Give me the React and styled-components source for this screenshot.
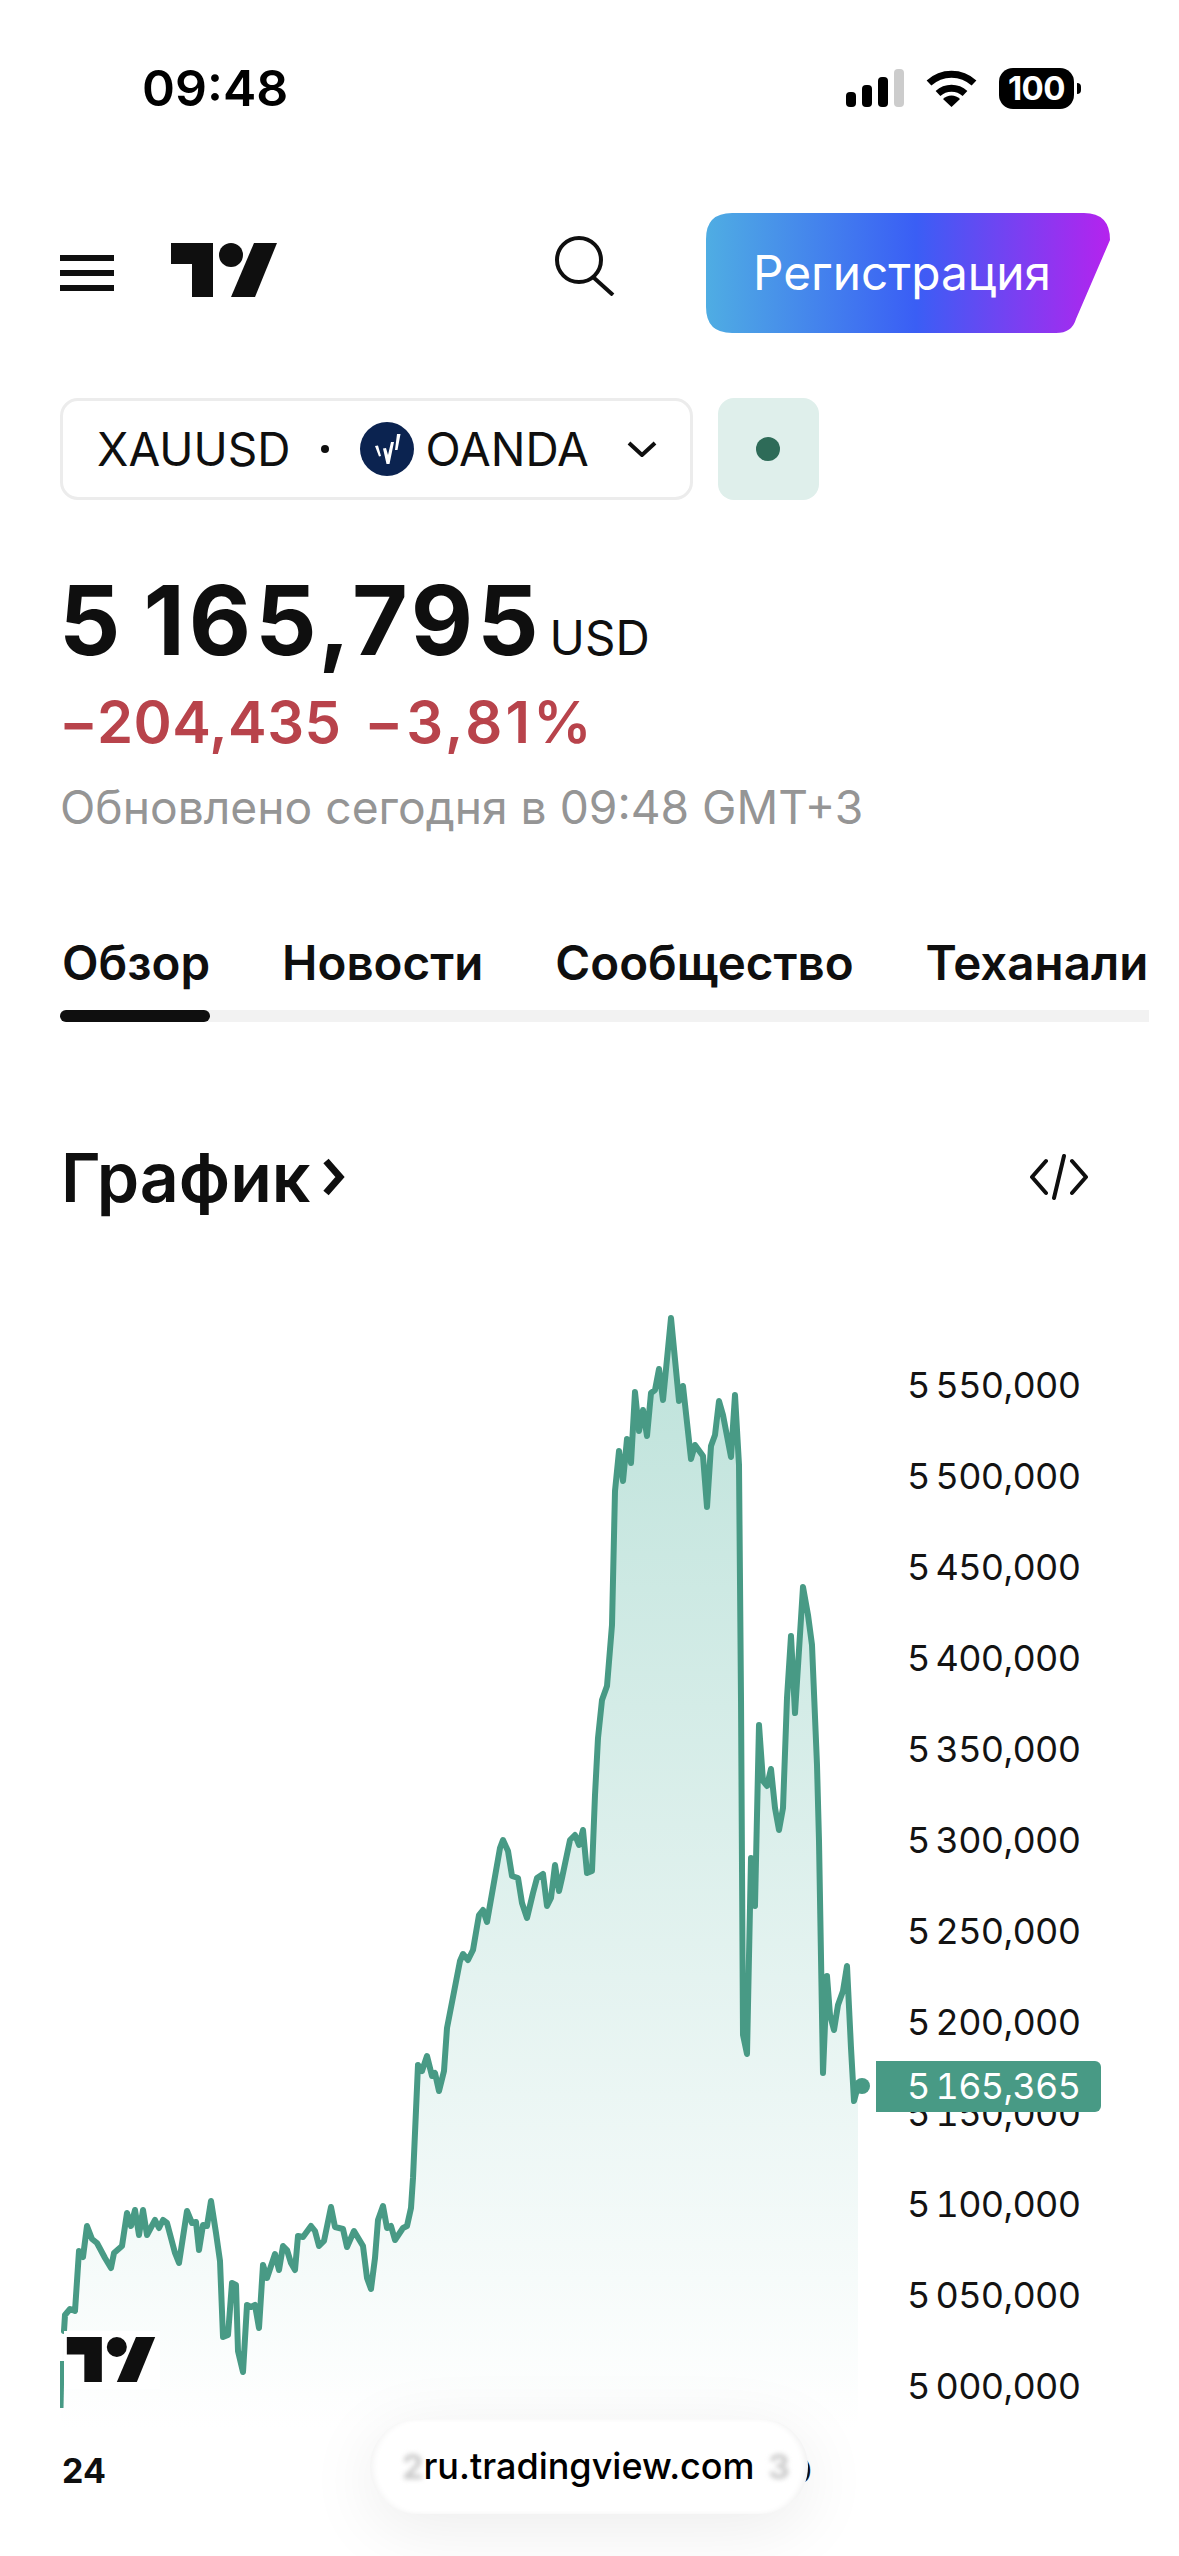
import React from "react";
import styled, { createGlobalStyle } from "styled-components";

const Global = createGlobalStyle`
  html, body { margin: 0; padding: 0; background: #fff; }
  body { font-family: Inter, "Noto Sans", "Liberation Sans", sans-serif; color: #0f0f0f; }
`;

const Page = styled.div`
  position: relative;
  width: 1179px;
  height: 2556px;
  overflow: hidden;
  background: #fff;
`;

const StatusBar = styled.div`
  height: 176px;
  display: flex;
  align-items: center;
  justify-content: space-between;
  padding: 0 98px 0 142px;
`;
const Time = styled.div`
  font-size: 50px;
  font-weight: 600;
  line-height: 60px;
  color: #000;
`;
const StatusIcons = styled.div`
  display: flex;
  align-items: center;
  gap: 22px;
`;
const Battery = styled.div`
  display: flex;
  align-items: center;
  gap: 3px;
`;
const BatteryBody = styled.div`
  width: 75px;
  height: 41px;
  border-radius: 14px;
  background: #000;
  color: #fff;
  display: flex;
  align-items: center;
  justify-content: center;
  font-size: 33px;
  font-weight: 700;
  letter-spacing: -0.5px;
`;
const BatteryCap = styled.div`
  width: 4px;
  height: 11px;
  border-radius: 0 4px 4px 0;
  background: #000;
`;

const Header = styled.header`
  margin-top: 37px;
  height: 120px;
  display: flex;
  align-items: center;
  padding: 0 69px 0 60px;
`;
const Burger = styled.div`
  width: 54px;
  display: flex;
  flex-direction: column;
  gap: 9px;
  span { display: block; height: 6px; background: #0f0f0f; }
`;
const LogoLink = styled.div`
  margin: -6px 0 0 57px;
  display: flex;
`;
const SearchBtn = styled.div`
  margin: -14px 91px 0 auto;
  display: flex;
`;
const Signup = styled.div`
  width: 404px;
  height: 120px;
  display: flex;
  align-items: center;
  justify-content: center;
  padding-right: 12px;
  box-sizing: border-box;
  color: #fff;
  font-size: 47.8px;
  line-height: 120px;
  font-weight: 400;
  background: linear-gradient(90deg, #4fade3 0%, #3a5ef5 52%, #b523ee 100%);
  clip-path: path("M26 0 H378 Q404 0 404 27 L370 106 Q366 120 350 120 H26 Q0 120 0 94 V26 Q0 0 26 0 Z");
`;

const SymbolRow = styled.div`
  margin-top: 65px;
  display: flex;
  gap: 25px;
  padding-left: 60px;
`;
const Selector = styled.div`
  width: 633px;
  height: 102px;
  box-sizing: border-box;
  border: 3px solid #ececec;
  border-radius: 18px;
  display: flex;
  align-items: center;
  padding-left: 34px;
  font-size: 46px;
  font-weight: 400;
`;
const Sep = styled.span`
  width: 8px;
  height: 8px;
  border-radius: 50%;
  background: #0f0f0f;
  margin: 0 31px;
`;
const BrokerLogo = styled.svg`
  margin-right: 11px;
  flex: none;
`;
const Caret = styled.svg`
  margin-left: 38px;
`;
const Status = styled.div`
  width: 101px;
  height: 102px;
  border-radius: 16px;
  background: #dfefeb;
  display: flex;
  align-items: center;
  justify-content: center;
  padding-right: 2px;
  box-sizing: border-box;
  i { display: block; width: 24px; height: 24px; border-radius: 50%; background: #2e6b58; }
`;

const PriceRow = styled.div`
  margin-top: 70px;
  padding-left: 59px;
  display: flex;
  align-items: baseline;
  gap: 7px;
  line-height: 100px;
`;
const Price = styled.span`
  font-size: 96px;
  font-weight: 700;
  letter-spacing: 4px;
`;
const Currency = styled.span`
  font-size: 47.5px;
  font-weight: 400;
`;
const Change = styled.div`
  margin-top: 4px;
  padding-left: 59px;
  display: flex;
  gap: 23px;
  font-size: 58px;
  font-weight: 600;
  line-height: 60px;
  color: #b8434b;
`;
const ChangeValue = styled.span`
  letter-spacing: ${(p) => p.$track}px;
`;
const Updated = styled.div`
  margin-top: 30px;
  padding-left: 60px;
  font-size: 46.2px;
  line-height: 50px;
  color: #959595;
`;

const Tabs = styled.div`
  margin: 106px 30px 0 60px;
  overflow: hidden;
`;
const TabList = styled.div`
  display: flex;
  gap: 72px;
  padding-left: 2px;
  white-space: nowrap;
  font-size: 47.5px;
  font-weight: 600;
  line-height: 50px;
`;
const Track = styled.div`
  margin-top: 22px;
  height: 12px;
  background: #f2f2f2;
  border-radius: 6px 0 0 6px;
`;
const TrackActive = styled.div`
  width: 150px;
  height: 12px;
  background: #0f0f0f;
  border-radius: 6px;
`;

const SectionHead = styled.div`
  margin-top: 115px;
  height: 80px;
  padding: 0 91px 0 61px;
  display: flex;
  align-items: center;
  justify-content: space-between;
`;
const SectionTitle = styled.div`
  display: flex;
  align-items: center;
  gap: 12px;
  font-size: 68px;
  font-weight: 600;
  line-height: 80px;
`;

const Chart = styled.div`
  position: relative;
  margin-top: 81px;
  height: 1130px;
  padding-left: 60px;
  display: flex;
`;
const Plot = styled.svg`
  display: block;
  flex: none;
`;
const Axis = styled.div`
  margin-left: 36px;
  padding-top: 42px;
  font-size: 36px;
  font-variant-numeric: tabular-nums;
  letter-spacing: -0.7px;
  line-height: 91px;
  color: #131313;
  white-space: nowrap;
`;
const AxisLabel = styled.div`
  height: 91px;
`;
const PriceTag = styled.div`
  position: absolute;
  left: 876px;
  top: 763px;
  width: 225px;
  height: 51px;
  box-sizing: border-box;
  padding-left: 31px;
  background: #489a85;
  border-radius: 0 6px 6px 0;
  color: #fff;
  font-size: 36px;
  font-variant-numeric: tabular-nums;
  letter-spacing: -0.7px;
  line-height: 51px;
`;
const ChartMark = styled.div`
  position: absolute;
  left: 64px;
  top: 1033px;
  width: 96px;
  height: 58px;
  background: #fff;
  box-sizing: border-box;
  padding: 6px 0 0 2px;
  svg { display: block; }
`;

const TimeAxis = styled.div`
  margin-top: 23px;
  padding-left: 62px;
  display: flex;
  font-size: 34px;
  font-weight: 700;
  line-height: 40px;
`;
const TimeLabel = styled.span`
  margin-left: ${(p) => p.$gap || 0}px;
`;

const AddressPill = styled.div`
  position: absolute;
  left: 370px;
  top: 2419px;
  width: 438px;
  height: 95px;
  border-radius: 48px;
  background: #fff;
  box-shadow: 0 14px 70px rgba(0, 0, 0, 0.08), inset 5px 0 6px -2px rgba(0, 0, 0, 0.05), inset -5px 0 6px -2px rgba(0, 0, 0, 0.06);
  display: flex;
  align-items: center;
  justify-content: center;
  box-sizing: border-box;
  font-size: 36px;
  font-weight: 500;
  line-height: 95px;
  color: #000;
`;
const Ghost = styled.span`
  position: absolute;
  top: 0;
  left: ${(p) => p.$x}px;
  font-size: 34px;
  font-weight: 700;
  color: #c9c9c9;
  filter: blur(2.5px);
`;

const raw = [
  [64,2333],[65,2317],[70,2311],[75,2313],[79,2253],[83,2259],[87,2228],[92,2241],[97,2245],[105,2260],[111,2270],[114,2255],[122,2248],
  [127,2215],[131,2228],[135,2212],[139,2237],[143,2212],[147,2237],[155,2222],[159,2230],[163,2222],[167,2225],[175,2255],[179,2265],
  [187,2213],[192,2225],[196,2224],[199,2252],[203,2227],[207,2228],[211,2203],[216,2235],[220,2263],[223,2339],[228,2337],[232,2285],
  [236,2287],[238,2353],[243,2374],[247,2307],[251,2309],[255,2307],[259,2330],[263,2267],[267,2280],[275,2256],[279,2272],[283,2248],
  [287,2252],[291,2265],[295,2272],[298,2238],[303,2239],[311,2228],[315,2233],[319,2248],[324,2243],[331,2209],[335,2229],[343,2231],
  [347,2249],[354,2233],[363,2248],[367,2280],[371,2291],[375,2260],[378,2222],[383,2208],[387,2230],[391,2228],[395,2242],[403,2230],
  [407,2228],[411,2210],[413,2180],[418,2067],[422,2073],[427,2058],[432,2078],[435,2075],[439,2093],[444,2073],[447,2030],[460,1963],
  [463,1956],[468,1962],[473,1952],[479,1917],[483,1912],[487,1924],[500,1850],[503,1842],[508,1853],[512,1878],[518,1880],[522,1905],
  [527,1920],[533,1895],[537,1880],[543,1876],[547,1908],[551,1900],[555,1867],[559,1893],[562,1880],[570,1842],[575,1837],[579,1847],
  [583,1832],[587,1875],[592,1873],[595,1797],[598,1740],[602,1702],[607,1688],[612,1627],[615,1493],[619,1453],[623,1483],[627,1441],
  [631,1465],[635,1394],[639,1433],[643,1412],[647,1438],[651,1395],[655,1392],[659,1371],[663,1402],[671,1320],[679,1403],[683,1388],
  [691,1461],[695,1447],[703,1458],[707,1509],[711,1448],[715,1437],[719,1403],[723,1417],[731,1459],[735,1397],[739,1467],[741,1700],
  [743,2037],[747,2056],[751,1860],[755,1908],[759,1727],[763,1783],[767,1788],[771,1771],[775,1810],[779,1832],[783,1810],[787,1700],
  [791,1638],[795,1715],[803,1589],[808,1617],[812,1647],[817,1767],[819,1843],[823,2075],[827,1978],[830,2017],[834,2032],[838,2007],
  [843,1993],[847,1968],[851,2050],[854,2103],[858,2088],[862,2088],
];
const linePath = "M" + raw.map((p) => p.join(" ")).join("L");
const areaPath = "M60 2430L61 2410L62 2363" + raw.filter((p) => p[0] <= 858).map((p) => "L" + p.join(" ")).join("") + "L858 2430Z";

const axisValues = ["5\u2009550,000","5\u2009500,000","5\u2009450,000","5\u2009400,000","5\u2009350,000","5\u2009300,000","5\u2009250,000","5\u2009200,000","5\u2009150,000","5\u2009100,000","5\u2009050,000","5\u2009000,000"];

const TvLogo = ({ w, h }) => (
  <svg width={w} height={h} viewBox="0 0 106 54" fill="#0f0f0f" aria-hidden="true">
    <path d="M0 0H42V54H21V21H0Z" />
    <circle cx="60" cy="12" r="12" />
    <path d="M83 0H106L84 54H60Z" />
  </svg>
);

export default function App() {
  return (
    <Page>
      <Global />
      <StatusBar>
        <Time>09:48</Time>
        <StatusIcons>
          <svg width="58" height="38" viewBox="0 0 58 38" aria-hidden="true">
            <rect x="0" y="23" width="10" height="15" rx="4" fill="#000" />
            <rect x="16" y="16" width="10" height="22" rx="4" fill="#000" />
            <rect x="32" y="8" width="10" height="30" rx="4" fill="#000" />
            <rect x="48" y="0" width="10" height="38" rx="4" fill="#cccccc" />
          </svg>
          <svg width="51" height="38" viewBox="0 0 51 38" aria-hidden="true">
            <path d="M3 14A33 33 0 0 1 48 14" fill="none" stroke="#000" strokeWidth="7" />
            <path d="M12 24.5A20 20 0 0 1 39 24.5" fill="none" stroke="#000" strokeWidth="7" />
            <path d="M25.5 38L17 30A12 12 0 0 1 34 30Z" fill="#000" />
          </svg>
          <Battery>
            <BatteryBody>100</BatteryBody>
            <BatteryCap />
          </Battery>
        </StatusIcons>
      </StatusBar>

      <Header>
        <Burger><span /><span /><span /></Burger>
        <LogoLink><TvLogo w={106} h={54} /></LogoLink>
        <SearchBtn>
          <svg width="60" height="60" viewBox="0 0 60 60" fill="none" stroke="#0f0f0f" strokeWidth="4" aria-hidden="true">
            <circle cx="24" cy="24" r="22" />
            <path d="M38 41L58 59" />
          </svg>
        </SearchBtn>
        <Signup>Регистрация</Signup>
      </Header>

      <SymbolRow>
        <Selector>
          <span>XAUUSD</span>
          <Sep />
          <BrokerLogo width="54" height="54" viewBox="0 0 54 54" aria-hidden="true">
            <circle cx="27" cy="27" r="27" fill="#0b2350" />
            <path d="M15 24L18 23.5L21 34L19 34.5ZM23 26.5L26 26L28 33L31 20H34L29.5 42H26.5ZM37 12H40.5L37.5 28H35Z" fill="#fff" />
          </BrokerLogo>
          <span>OANDA</span>
          <Caret width="30" height="16" viewBox="0 0 30 16" fill="none" stroke="#0f0f0f" strokeWidth="4" aria-hidden="true">
            <path d="M2 2L15 14L28 2" />
          </Caret>
        </Selector>
        <Status><i /></Status>
      </SymbolRow>

      <PriceRow>
        <Price>{"5\u2009165,795"}</Price>
        <Currency>USD</Currency>
      </PriceRow>
      <Change>
        <ChangeValue $track={0.4}>−204,435</ChangeValue>
        <ChangeValue $track={3.2}>−3,81%</ChangeValue>
      </Change>
      <Updated>Обновлено сегодня в 09:48 GMT+3</Updated>

      <Tabs>
        <TabList>
          <span>Обзор</span>
          <span>Новости</span>
          <span>Сообщество</span>
          <span>Теханализ</span>
        </TabList>
        <Track><TrackActive /></Track>
      </Tabs>

      <SectionHead>
        <SectionTitle>
          График
          <svg width="22" height="38" viewBox="0 0 22 38" fill="none" stroke="#0f0f0f" strokeWidth="7" aria-hidden="true">
            <path d="M3 3L17 19L3 35" />
          </svg>
        </SectionTitle>
        <svg width="58" height="46" viewBox="0 0 58 46" fill="none" stroke="#0f0f0f" strokeWidth="4" strokeLinecap="round" strokeLinejoin="round" aria-hidden="true">
          <path d="M16 7L2 23L16 39M42 7L56 23L42 39M34 2L24 44" />
        </svg>
      </SectionHead>

      <Chart>
        <Plot width="811" height="1130" viewBox="60 1300 811 1130" aria-hidden="true">
          <defs>
            <linearGradient id="area" gradientUnits="userSpaceOnUse" x1="0" y1="1320" x2="0" y2="2430">
              <stop offset="0" stopColor="#bde2da" />
              <stop offset="0.7" stopColor="#ebf6f4" />
              <stop offset="1" stopColor="#ffffff" />
            </linearGradient>
          </defs>
          <path d={areaPath} fill="url(#area)" />
          <path d="M61 2410L62 2363" fill="none" stroke="#489a85" strokeWidth="5" />
          <path d={linePath} fill="none" stroke="#489a85" strokeWidth="6" strokeLinejoin="round" strokeLinecap="round" />
          <circle cx="862" cy="2088" r="8" fill="#489a85" />
        </Plot>
        <Axis>
          {axisValues.map((v) => <AxisLabel key={v}>{v}</AxisLabel>)}
        </Axis>
        <PriceTag>{"5\u2009165,365"}</PriceTag>
        <ChartMark><TvLogo w={90} h={45} /></ChartMark>
      </Chart>

      <TimeAxis>
        <span>24</span>
        <TimeLabel $gap={661}>30</TimeLabel>
      </TimeAxis>

      <AddressPill>
        <Ghost $x={32}>2</Ghost>
        ru.tradingview.com
        <Ghost $x={398}>3</Ghost>
      </AddressPill>
    </Page>
  );
}
